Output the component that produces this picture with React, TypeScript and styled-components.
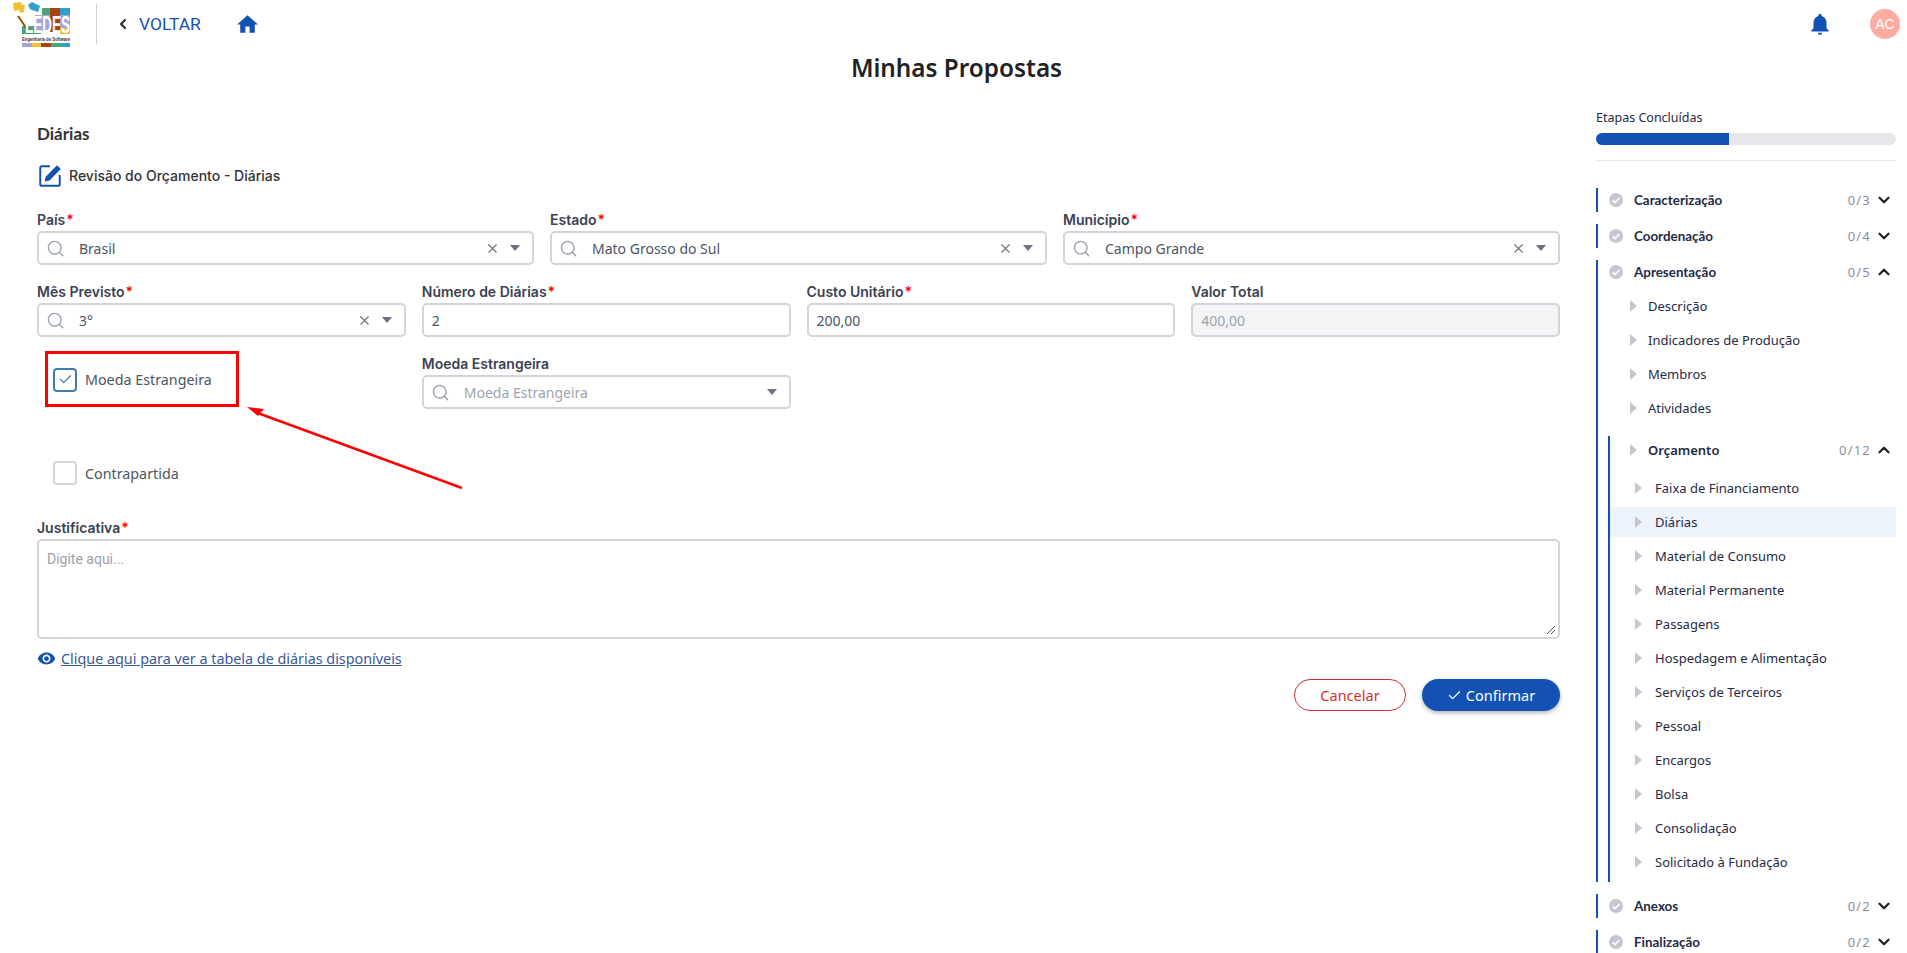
import React from 'react';
import styled, { createGlobalStyle } from 'styled-components';
import { ChevronDown, ChevronLeft, ChevronUp, Search, X, Check } from 'lucide-react';

const BLUE = '#1351b4';
const PLEX = '"Noto Sans", "Open Sans", sans-serif';
const HEAD = 'Lato, "Noto Sans", sans-serif';

const GlobalStyle = createGlobalStyle`
    html, body {
        margin: 0;
        height: 953px;
        overflow: hidden;
        background: #fff;
    }
    * {
        box-sizing: border-box;
    }
`;

const Logo = () => (
    <LogoSvg viewBox="0 0 58 46" width="58" height="46">
        <path d="M0 2l8-1 1 3h3l-1 7-4 1-1-3-5 1z" fill="#f2c230" />
        <path d="M15 4l4-3 8 4-2 6-6-2-2-1z" fill="#2f9fd0" />
        <rect x="9" y="25" width="19" height="8" fill="#4aa37a" />
        <rect x="22" y="14" width="15" height="16" fill="#a6a5d6" />
        <rect x="29" y="7" width="8" height="7" fill="#4aa37a" />
        <rect x="37" y="7" width="10" height="24" fill="#a8450f" />
        <rect x="47" y="7" width="10" height="7" fill="#2f9fd0" />
        <rect x="47" y="14" width="10" height="13" fill="#a6a5d6" />
        <rect x="47" y="27" width="10" height="6" fill="#f2c230" />
        <path d="M5 14l8-2 3 6-6 3z" fill="#fff" />
        <path d="M5 15l9 13" stroke="#a8450f" strokeWidth="2" />
        <text x="12" y="32" fill="#fff" fontFamily="Liberation Sans, sans-serif" fontWeight="700" fontSize="24" textLength="45" lengthAdjust="spacingAndGlyphs">LEDES</text>
        <text x="9" y="40" fill="#333" fontFamily="Liberation Sans, sans-serif" fontWeight="700" fontSize="6" textLength="48" lengthAdjust="spacingAndGlyphs">Engenharia de Software</text>
        <rect x="9" y="42" width="10" height="4" fill="#a6a5d6" />
        <rect x="19" y="42" width="9" height="4" fill="#f2c230" />
        <rect x="28" y="42" width="10" height="4" fill="#a8450f" />
        <rect x="38" y="42" width="10" height="4" fill="#4aa37a" />
        <rect x="48" y="42" width="9" height="4" fill="#2f9fd0" />
    </LogoSvg>
);

const StepIcon = () => (
    <svg viewBox="0 0 14 14" width="14" height="14">
        <circle cx="7" cy="7" r="7" fill="#c5c6d0" />
        <path d="M3.6 7.3 6 9.6l4.4-4.6" fill="none" stroke="#fff" strokeWidth="1.6" />
    </svg>
);

const Triangle = () => (
    <svg viewBox="0 0 7 12" width="7" height="12">
        <path d="M0 0l7 6-7 6z" fill="#c5c6d0" />
    </svg>
);

const SelectField = ({ value, placeholder, clearable = true }: { value?: string; placeholder?: string; clearable?: boolean }) => (
    <FieldBox>
        <SearchIcon><Search size={19} strokeWidth={1.8} /></SearchIcon>
        {value ? <FieldValue>{value}</FieldValue> : <FieldPlaceholder>{placeholder}</FieldPlaceholder>}
        {clearable && <ClearIcon><X size={15} strokeWidth={1.8} /></ClearIcon>}
        <Caret />
    </FieldBox>
);

const orcamentoItems = [
    'Faixa de Financiamento',
    'Diárias',
    'Material de Consumo',
    'Material Permanente',
    'Passagens',
    'Hospedagem e Alimentação',
    'Serviços de Terceiros',
    'Pessoal',
    'Encargos',
    'Bolsa',
    'Consolidação',
    'Solicitado à Fundação',
];

const StepRow = ({ title, count, open = false }: { title: string; count: string; open?: boolean }) => (
    <StepHeader>
        <StepIcon />
        <StepTitle>{title}</StepTitle>
        <StepCount>{count}</StepCount>
        {open ? <ChevronUp size={18} strokeWidth={3} color="#222" /> : <ChevronDown size={18} strokeWidth={3} color="#222" />}
    </StepHeader>
);

const App = () => {
    return (
        <Page>
            <GlobalStyle />
            <Header>
                <Logo />
                <HeaderDivider />
                <BackLink>
                    <ChevronLeft size={16} strokeWidth={3} color="#222" />
                    <span>VOLTAR</span>
                </BackLink>
                <HomeIcon viewBox="0 0 24 24" width="25" height="25">
                    <path d="M10 20v-6h4v6h5v-8h3L12 3 2 12h3v8z" />
                </HomeIcon>
                <HeaderRight>
                    <BellIcon viewBox="0 0 24 24" width="26" height="26">
                        <path d="M12 22c1.1 0 2-.9 2-2h-4c0 1.1.89 2 2 2zm6-6v-5c0-3.07-1.64-5.64-4.5-6.32V4c0-.83-.67-1.5-1.5-1.5s-1.5.67-1.5 1.5v.68C7.63 5.36 6 7.92 6 11v5l-2 2v1h16v-1l-2-2z" />
                    </BellIcon>
                    <Avatar>AC</Avatar>
                </HeaderRight>
            </Header>
            <PageTitle>Minhas Propostas</PageTitle>
            <Columns>
                <Main>
                    <SectionTitle>Diárias</SectionTitle>
                    <SubTitle>
                        <svg viewBox="0 0 24 24" width="26" height="26">
                            <path d="M12 4H4.5A1.5 1.5 0 0 0 3 5.5v15A1.5 1.5 0 0 0 4.5 22h15a1.5 1.5 0 0 0 1.5-1.5V12" fill="none" stroke={BLUE} strokeWidth="1.8" />
                            <path d="M7 18l1-4.5L18.5 3l3.5 3.5L11.5 17z" fill={BLUE} />
                        </svg>
                        <span>Revisão do Orçamento - Diárias</span>
                    </SubTitle>
                    <ThreeCols>
                        <Field>
                            <Label>País<Req>*</Req></Label>
                            <SelectField value="Brasil" />
                        </Field>
                        <Field>
                            <Label>Estado<Req>*</Req></Label>
                            <SelectField value="Mato Grosso do Sul" />
                        </Field>
                        <Field>
                            <Label>Município<Req>*</Req></Label>
                            <SelectField value="Campo Grande" />
                        </Field>
                    </ThreeCols>
                    <FourCols>
                        <Field>
                            <Label>Mês Previsto<Req>*</Req></Label>
                            <SelectField value="3°" />
                        </Field>
                        <Field>
                            <Label>Número de Diárias<Req>*</Req></Label>
                            <TextBox>2</TextBox>
                        </Field>
                        <Field>
                            <Label>Custo Unitário<Req>*</Req></Label>
                            <TextBox>200,00</TextBox>
                        </Field>
                        <Field>
                            <Label>Valor Total</Label>
                            <TextBox $disabled>400,00</TextBox>
                        </Field>
                    </FourCols>
                    <CheckRow>
                        <Highlighted>
                            <CheckBox $checked><Check size={15} strokeWidth={2} /></CheckBox>
                            <CheckLabel>Moeda Estrangeira</CheckLabel>
                        </Highlighted>
                        <ForeignField>
                            <Label>Moeda Estrangeira</Label>
                            <SelectField placeholder="Moeda Estrangeira" clearable={false} />
                        </ForeignField>
                    </CheckRow>
                    <PlainCheck>
                        <CheckBox />
                        <CheckLabel>Contrapartida</CheckLabel>
                    </PlainCheck>
                    <JustifyField>
                        <Label>Justificativa<Req>*</Req></Label>
                        <TextArea>
                            Digite aqui...
                            <Resizer viewBox="0 0 10 10" width="10" height="10">
                                <path d="M9 1 1 9M9 5 5 9" stroke="#555" strokeWidth="1" />
                            </Resizer>
                        </TextArea>
                    </JustifyField>
                    <TableLink>
                        <svg viewBox="0 0 24 24" width="19" height="19" fill={BLUE}>
                            <path d="M12 4.5C7 4.5 2.73 7.61 1 12c1.73 4.39 6 7.5 11 7.5s9.27-3.11 11-7.5c-1.73-4.39-6-7.5-11-7.5zM12 17c-2.76 0-5-2.24-5-5s2.24-5 5-5 5 2.24 5 5-2.24 5-5 5zm0-8c-1.66 0-3 1.34-3 3s1.34 3 3 3 3-1.34 3-3-1.34-3-3-3z" />
                        </svg>
                        <span>Clique aqui para ver a tabela de diárias disponíveis</span>
                    </TableLink>
                    <Actions>
                        <CancelButton>Cancelar</CancelButton>
                        <ConfirmButton><Check size={15} strokeWidth={2} />Confirmar</ConfirmButton>
                    </Actions>
                </Main>
                <Sidebar>
                    <ProgressLabel>Etapas Concluídas</ProgressLabel>
                    <ProgressTrack><ProgressFill style={{ width: '44.3%' }} /></ProgressTrack>
                    <SideDivider />
                    <Steps>
                        <StepRow title="Caracterização" count="0/3" />
                        <StepRow title="Coordenação" count="0/4" />
                        <StepGroup>
                            <StepRow title="Apresentação" count="0/5" open />
                            <SubList>
                                {['Descrição', 'Indicadores de Produção', 'Membros', 'Atividades'].map((item) => (
                                    <SubItem key={item}><Triangle />{item}</SubItem>
                                ))}
                            </SubList>
                            <BudgetGroup>
                                <BudgetHeader>
                                    <Triangle />
                                    <BudgetTitle>Orçamento</BudgetTitle>
                                    <StepCount>0/12</StepCount>
                                    <ChevronUp size={18} strokeWidth={3} color="#222" />
                                </BudgetHeader>
                                <BudgetList>
                                    {orcamentoItems.map((item) => (
                                        <BudgetItem key={item} $active={item === 'Diárias'}><Triangle />{item}</BudgetItem>
                                    ))}
                                </BudgetList>
                            </BudgetGroup>
                        </StepGroup>
                        <StepRow title="Anexos" count="0/2" />
                        <StepRow title="Finalização" count="0/2" />
                    </Steps>
                </Sidebar>
            </Columns>
            <ArrowOverlay viewBox="0 0 230 90" width="230" height="90">
                <path d="M222 88 15 12" stroke="#f00" strokeWidth="2.4" />
                <path d="M7 7 24 9 18 16z" fill="#f00" />
            </ArrowOverlay>
        </Page>
    );
};

const Page = styled.div`
    position: relative;
    width: 1907px;
    height: 953px;
    overflow: hidden;
    font-family: ${PLEX};
    color: #333;
`;

const Header = styled.header`
    display: flex;
    align-items: center;
    height: 48px;
    padding-left: 13px;
`;

const LogoSvg = styled.svg`
    flex: none;
    overflow: visible;
`;

const HeaderDivider = styled.div`
    width: 1px;
    height: 40px;
    margin-left: 25px;
    background: #d0d0d0;
`;

const BackLink = styled.div`
    display: flex;
    align-items: center;
    gap: 8px;
    margin-left: 18px;
    font-family: Roboto, sans-serif;
    font-size: 17.4px;
    color: ${BLUE};
`;

const HomeIcon = styled.svg`
    margin-left: 34px;
    fill: ${BLUE};
`;

const HeaderRight = styled.div`
    display: flex;
    align-items: center;
    margin-left: auto;
    padding-right: 7px;
    gap: 37px;
`;

const BellIcon = styled.svg`
    fill: ${BLUE};
`;

const Avatar = styled.div`
    display: flex;
    align-items: center;
    justify-content: center;
    width: 30px;
    height: 30px;
    border-radius: 50%;
    background: #ffaba2;
    color: #fff;
    font-family: "Liberation Sans", sans-serif;
    font-size: 14px;
`;

const PageTitle = styled.h1`
    margin: 3px 0 0;
    padding-left: 6px;
    height: 34px;
    line-height: 34px;
    text-align: center;
    font-family: "Noto Sans", sans-serif;
    font-size: 24.3px;
    font-weight: 600;
    color: #222;
`;

const Columns = styled.div`
    display: flex;
    padding: 0 11px 0 37px;
    gap: 36px;
`;

const Main = styled.main`
    width: 1523px;
    padding-top: 39px;
`;

const SectionTitle = styled.h2`
    margin: 0;
    height: 20px;
    line-height: 20px;
    font-family: ${HEAD};
    font-size: 17px;
    font-weight: 700;
    color: #333;
`;

const SubTitle = styled.div`
    display: flex;
    align-items: center;
    gap: 6px;
    height: 24px;
    margin-top: 19px;
    font-family: Inter, Roboto, sans-serif;
    font-size: 14px;
    font-weight: 500;
    color: #333;
`;

const ThreeCols = styled.div`
    display: grid;
    grid-template-columns: repeat(3, 1fr);
    gap: 16px;
    margin-top: 23px;
`;

const FourCols = styled.div`
    display: grid;
    grid-template-columns: repeat(4, 1fr);
    gap: 16px;
    margin-top: 17px;
`;

const Field = styled.div`
    display: flex;
    flex-direction: column;
`;

const ForeignField = styled(Field)`
    margin-top: 3px;
`;

const JustifyField = styled(Field)`
    margin-top: 33px;
`;

const Label = styled.label`
    height: 21px;
    line-height: 20px;
    font-family: Inter, Roboto, sans-serif;
    font-size: 14px;
    font-weight: 600;
    color: #3b4252;
`;

const Req = styled.span`
    margin-left: 1px;
    color: #f00;
`;

const FieldBox = styled.div`
    display: flex;
    align-items: center;
    height: 34px;
    padding: 0 12px 0 7px;
    border: 2px solid #d1d5db;
    border-radius: 5px;
    background: #fff;
`;

const SearchIcon = styled.span`
    display: flex;
    color: #9ca3af;
`;

const FieldValue = styled.span`
    flex: 1;
    margin-left: 14px;
    font-size: 14px;
    color: #4b5563;
`;

const FieldPlaceholder = styled(FieldValue)`
    color: #9ca3af;
`;

const ClearIcon = styled.span`
    display: flex;
    margin-right: 10px;
    color: #6b7280;
`;

const Caret = styled.span`
    width: 0;
    height: 0;
    border-left: 5.5px solid transparent;
    border-right: 5.5px solid transparent;
    border-top: 6px solid #6b7280;
`;

const TextBox = styled.div<{ $disabled?: boolean }>`
    display: flex;
    align-items: center;
    height: 34px;
    padding: 0 8px;
    border: 2px solid #d1d5db;
    border-radius: 5px;
    background: ${(p) => (p.$disabled ? '#f3f4f6' : '#fff')};
    color: ${(p) => (p.$disabled ? '#9ca3af' : '#4b5563')};
    font-size: 14px;
`;

const CheckRow = styled.div`
    display: grid;
    grid-template-columns: repeat(4, 1fr);
    gap: 16px;
    margin-top: 14px;
    align-items: start;
`;

const Highlighted = styled.div`
    display: flex;
    align-items: center;
    gap: 8px;
    width: 194px;
    height: 56px;
    margin-left: 8px;
    padding: 1px 0 0 5px;
    border: 3px solid #f00;
`;

const PlainCheck = styled.div`
    display: flex;
    align-items: center;
    gap: 8px;
    height: 24px;
    margin: 52px 0 0 16px;
`;

const CheckBox = styled.span<{ $checked?: boolean }>`
    display: flex;
    align-items: center;
    justify-content: center;
    width: 24px;
    height: 24px;
    border: 2px solid ${(p) => (p.$checked ? '#3f7cb0' : '#d1d5db')};
    border-radius: 4px;
    color: #3f7cb0;
`;

const CheckLabel = styled.span`
    font-size: 14.3px;
    color: #4b5563;
`;

const TextArea = styled.div`
    position: relative;
    height: 100px;
    padding: 8px;
    border: 2px solid #d1d5db;
    border-radius: 5px;
    font-family: Roboto, sans-serif;
    font-size: 14px;
    line-height: 20px;
    color: #a1a1aa;
`;

const Resizer = styled.svg`
    position: absolute;
    right: 2px;
    bottom: 2px;
`;

const TableLink = styled.a`
    display: flex;
    align-items: center;
    gap: 5px;
    height: 20px;
    margin-top: 9px;
    font-size: 14.35px;
    color: #3b5998;

    span {
        text-decoration: underline;
    }
`;

const Actions = styled.div`
    display: flex;
    justify-content: flex-end;
    gap: 16px;
    margin-top: 11px;
`;

const CancelButton = styled.button`
    width: 112px;
    height: 32px;
    border: 1px solid #d32f2f;
    border-radius: 16px;
    background: #fff;
    color: #d32f2f;
    font-family: ${PLEX};
    font-size: 14.5px;
`;

const ConfirmButton = styled.button`
    display: flex;
    align-items: center;
    justify-content: center;
    gap: 4px;
    width: 138px;
    height: 32px;
    border: none;
    border-radius: 16px;
    background: ${BLUE};
    color: #fff;
    font-family: ${PLEX};
    font-size: 14.5px;
    box-shadow: 0 2px 4px rgba(0, 0, 0, 0.3);
`;

const Sidebar = styled.aside`
    width: 300px;
    padding-top: 25px;
`;

const ProgressLabel = styled.div`
    height: 16px;
    line-height: 16px;
    font-size: 12.5px;
    color: #1f2a44;
`;

const ProgressTrack = styled.div`
    height: 12px;
    margin-top: 7px;
    border-radius: 6px;
    background: #e5e7eb;
    overflow: hidden;
`;

const ProgressFill = styled.div`
    height: 100%;
    background: ${BLUE};
`;

const SideDivider = styled.div`
    height: 1px;
    margin-top: 15px;
    background: #e5e7eb;
`;

const Steps = styled.div`
    display: flex;
    flex-direction: column;
    gap: 12px;
    margin-top: 27px;
`;

const StepHeader = styled.div`
    display: flex;
    align-items: center;
    height: 24px;
    padding: 0 3px 0 11px;
    border-left: 2px solid ${BLUE};
`;

const StepTitle = styled.span`
    flex: 1;
    margin-left: 11px;
    font-family: ${HEAD};
    font-size: 13.4px;
    font-weight: 700;
    color: #1f2a44;
`;

const StepCount = styled.span`
    margin-right: 4px;
    font-size: 13px;
    color: #8a8d99;
    letter-spacing: 1.2px;
`;

const StepGroup = styled.div`
    border-left: 2px solid ${BLUE};

    ${StepHeader} {
        border-left: none;
    }
`;

const SubList = styled.div`
    display: flex;
    flex-direction: column;
    padding-top: 5px;
`;

const SubItem = styled.div`
    display: flex;
    align-items: center;
    gap: 11px;
    height: 34px;
    padding-left: 32px;
    font-size: 13px;
    color: #1f2a44;
`;

const BudgetGroup = styled.div`
    margin: 11px 0 0 10px;
    border-left: 2px solid ${BLUE};
`;

const BudgetHeader = styled.div`
    display: flex;
    align-items: center;
    height: 35px;
    padding: 0 3px 7px 20px;
`;

const BudgetTitle = styled.span`
    flex: 1;
    margin-left: 11px;
    font-size: 13px;
    font-weight: 600;
    color: #1f2a44;
`;

const BudgetList = styled.div`
    display: flex;
    flex-direction: column;
    gap: 4px;
    padding: 2px 0 5px;
`;

const BudgetItem = styled.div<{ $active?: boolean }>`
    display: flex;
    align-items: center;
    gap: 13px;
    height: 30px;
    padding-left: 25px;
    font-size: 13px;
    color: #1f2a44;
    background: ${(p) => (p.$active ? '#edf3fb' : 'transparent')};
`;

const ArrowOverlay = styled.svg`
    position: absolute;
    left: 240px;
    top: 400px;
`;

export default App;
